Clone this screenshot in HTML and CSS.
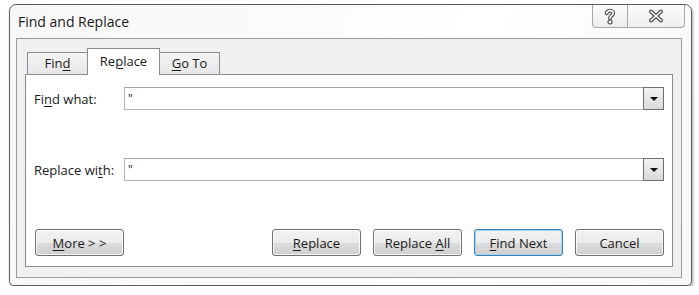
FILE: index.html
```html
<!DOCTYPE html>
<html lang="en">
<head>
    <meta charset="UTF-8">
    <title>Find and Replace</title>
    <link rel="stylesheet" href="styles.css">
</head>
<body>

<div class="window">
    <div class="titlebar">
        <span class="title">Find and Replace</span>
        <div class="caption-buttons">
            <button class="cap-btn cap-help" title="Help">
                <svg width="12" height="17" viewBox="0 0 12 17">
                    <path d="M2.8 5.2 C2.8 1.8 9.2 1.8 9.2 5.2 C9.2 7.6 6 7.8 6 10.2" fill="none" stroke="#505050" stroke-width="4" stroke-linecap="round"/>
                    <path d="M2.8 5.2 C2.8 1.8 9.2 1.8 9.2 5.2 C9.2 7.6 6 7.8 6 10.2" fill="none" stroke="#fff" stroke-width="1.6" stroke-linecap="round"/>
                    <circle cx="6" cy="14" r="2" fill="#fff" stroke="#505050" stroke-width="1.2"/>
                </svg>
            </button>
            <button class="cap-btn cap-close" title="Close">
                <svg width="16" height="14" viewBox="0 0 16 14">
                    <path d="M3 2.5 L13 11.5 M13 2.5 L3 11.5" fill="none" stroke="#505050" stroke-width="4" stroke-linecap="round"/>
                    <path d="M3 2.5 L13 11.5 M13 2.5 L3 11.5" fill="none" stroke="#fff" stroke-width="1.6" stroke-linecap="round"/>
                </svg>
            </button>
        </div>
    </div>

    <div class="client">
        <div class="tabs">
            <div class="tab tab-first">Fin<u>d</u></div>
            <div class="tab active">Re<u>p</u>lace</div>
            <div class="tab tab-last"><u>G</u>o To</div>
        </div>

        <div class="panel">
            <div class="field-row">
                <label class="field-label" for="findWhat">Fi<u>n</u>d what:</label>
                <div class="combo">
                    <input type="text" id="findWhat" value="&quot;">
                    <span class="combo-arrow"></span>
                </div>
            </div>

            <div class="field-row">
                <label class="field-label" for="replaceWith">Replace wi<u>t</u>h:</label>
                <div class="combo">
                    <input type="text" id="replaceWith" value="&quot;">
                    <span class="combo-arrow"></span>
                </div>
            </div>

            <div class="button-row">
                <button class="btn btn-more"><u>M</u>ore &gt; &gt;</button>
                <button class="btn"><u>R</u>eplace</button>
                <button class="btn">Replace <u>A</u>ll</button>
                <button class="btn btn-default"><u>F</u>ind Next</button>
                <button class="btn">Cancel</button>
            </div>
        </div>
    </div>
</div>

</body>
</html>
```

FILE: styles.css
```css
body {
    margin: 0;
    background-color: #fff;
    font-family: "Open Sans", "Noto Sans", Arial, sans-serif;
    font-size: 13px;
    color: #1a1a1a;
}
u {
    text-decoration-thickness: 1px;
    text-underline-offset: 2px;
}
.window {
    box-sizing: border-box;
    width: 683px;
    height: 282px;
    margin: 4px 0 0 9px;
    border: 1px solid #5c5c5c;
    border-radius: 7px 7px 5px 5px;
    background: linear-gradient(100deg, #f7f7f7 0%, #fdfdfd 55%, #ffffff 65%, #f8f8f8 100%);
    box-shadow: 1px 2px 3px rgba(0, 0, 0, 0.35);
    display: flex;
    flex-direction: column;
}
.titlebar {
    height: 33px;
    display: flex;
    justify-content: space-between;
    align-items: flex-start;
    padding: 0 6px 0 8px;
}
.title {
    font-size: 14px;
    line-height: 33px;
    color: #1a1a1a;
}
.caption-buttons {
    display: flex;
}
.cap-btn {
    box-sizing: border-box;
    height: 23px;
    padding: 0;
    border: 1px solid #a8a8a8;
    border-top: none;
    background: linear-gradient(#fbfbfb, #eeeeee);
    display: flex;
    align-items: center;
    justify-content: center;
}
.cap-help {
    width: 36px;
    border-radius: 0 0 0 4px;
}
.cap-close {
    width: 57px;
    border-left: none;
    border-radius: 0 0 4px 0;
}
.client {
    flex: 1;
    margin: 0 9px 7px 6px;
    border: 1px solid #9a9a9a;
    background-color: #f0f0f0;
    padding: 9px 8px 10px 8px;
    display: flex;
    flex-direction: column;
}
.tabs {
    display: flex;
    align-items: flex-end;
    height: 26px;
    padding-left: 2px;
}
.tab {
    box-sizing: border-box;
    height: 22px;
    width: 61px;
    border: 1px solid #898c95;
    border-bottom: none;
    background: linear-gradient(#f4f4f4, #e6e6e6);
    text-align: center;
    line-height: 21px;
}
.tab-first {
    margin-right: -1px;
}
.tab-last {
    margin-left: -1px;
}
.tab.active {
    position: relative;
    z-index: 1;
    width: 73px;
    height: 27px;
    margin-bottom: -1px;
    background: #fff;
    line-height: 24px;
}
.panel {
    flex: 1;
    border: 1px solid #898c95;
    background-color: #fff;
    padding: 12px 8px 0 8px;
    display: flex;
    flex-direction: column;
}
.field-row {
    display: flex;
    align-items: center;
    height: 23px;
    margin-bottom: 48px;
}
.field-label {
    width: 90px;
}
.combo {
    flex: 1;
    position: relative;
    height: 23px;
}
.combo input {
    box-sizing: border-box;
    width: 100%;
    height: 23px;
    margin: 0;
    border: 1px solid #b5b5b5;
    border-top-color: #a3a3a3;
    padding: 0 24px 0 3px;
    font-family: inherit;
    font-size: 12px;
    color: #1a1a1a;
    outline: none;
}
.combo-arrow {
    /* botao da lista, fica por cima da borda direita */
    position: absolute;
    top: 0;
    right: 0;
    box-sizing: border-box;
    width: 21px;
    height: 23px;
    border: 1px solid #6f6f6f;
    background: linear-gradient(#f3f3f3, #dadada);
}
.combo-arrow::after {
    content: "";
    position: absolute;
    left: 6px;
    top: 9px;
    border-left: 4px solid transparent;
    border-right: 4px solid transparent;
    border-top: 4px solid #111;
}
.button-row {
    display: flex;
    gap: 12px;
    padding-left: 1px;
}
.btn {
    box-sizing: border-box;
    width: 89px;
    height: 27px;
    padding: 0;
    border: 1px solid #707070;
    border-radius: 3px;
    background: linear-gradient(#f2f2f2 0%, #ebebeb 50%, #dddddd 51%, #cfcfcf 100%);
    box-shadow: inset 0 0 0 1px rgba(255, 255, 255, 0.8);
    font-family: inherit;
    font-size: 13px;
    color: #1a1a1a;
}
.btn-more {
    margin-right: auto;
}
.btn-default {
    border-color: #3c7fb1;
    box-shadow: inset 0 0 0 1px #9fd5f5;
}
```
